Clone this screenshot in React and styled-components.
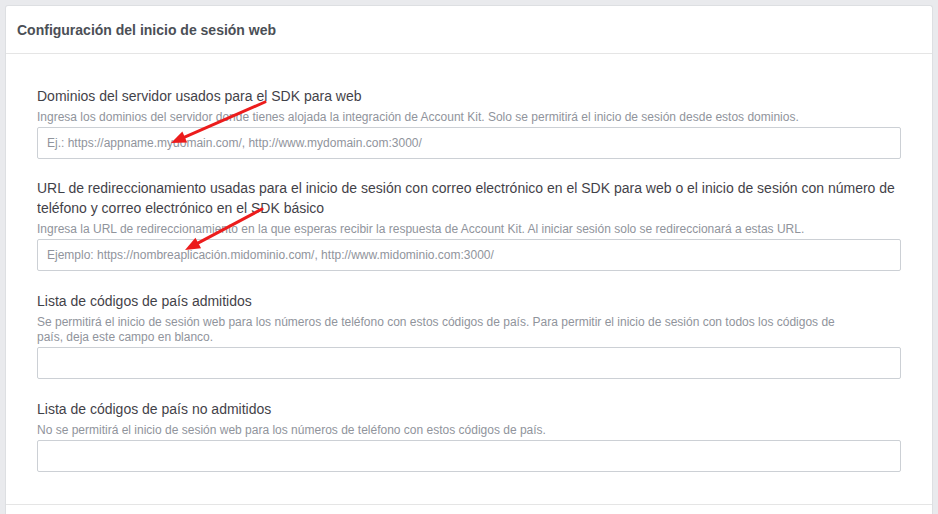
import React from "react";
import styled, { createGlobalStyle } from "styled-components";

const Global = createGlobalStyle`
  html, body { margin: 0; padding: 0; background: #e9eaed; }
  body { font-family: "Liberation Sans", Arial, Helvetica, sans-serif; }
  * { box-sizing: border-box; }
`;

const Page = styled.div`
  position: relative;
  width: 938px;
  height: 514px;
  overflow: hidden;
  padding: 5px 5px 0 5px;
`;

const Card = styled.section`
  background: #fff;
  border: 1px solid #dddfe2;
  border-bottom: none;
  border-radius: 3px 3px 0 0;
  height: 100%;
  display: flex;
  flex-direction: column;
`;

const Header = styled.header`
  height: 48px;
  padding: 0 11px;
  display: flex;
  align-items: center;
  border-bottom: 1px solid #e5e5e5;
`;

const Title = styled.h2`
  margin: 0;
  font-size: 14px;
  font-weight: bold;
  color: #4b4f56;
  padding-top: 1px;
`;

const Body = styled.div`
  padding: 32px 31px 32px 31px;
  display: flex;
  flex-direction: column;
  gap: 20px;
  border-bottom: 1px solid #e5e5e5;
`;

const Field = styled.div`
  display: flex;
  flex-direction: column;
  &:first-child { margin-bottom: -1px; }
`;

const Label = styled.label`
  font-size: 14px;
  line-height: 20px;
  color: #1d2129;
  opacity: 0.85;
`;

const Desc = styled.div`
  font-size: 12px;
  line-height: 15px;
  color: #90949c;
  margin-top: 4px;
  max-width: 800px;
  &:first-child { margin-top: 3px; }
`;

const Input = styled.input`
  margin-top: 2px;
  height: 32px;
  width: 100%;
  border: 1px solid #ccd0d5;
  border-radius: 2px;
  padding: 0 9px;
  font-family: inherit;
  font-size: 12px;
  color: #1d2129;
  background: #fff;
  &::placeholder { color: #90949c; }
`;

const Footer = styled.div`
  flex: 1;
`;

const Overlay = styled.svg`
  position: absolute;
  inset: 0;
  pointer-events: none;
`;

function Arrow({ x1, y1, x2, y2 }) {
  const dx = x2 - x1, dy = y2 - y1;
  const len = Math.hypot(dx, dy);
  const ux = dx / len, uy = dy / len;
  const hl = 15, hw = 6;
  const bx = x2 - ux * hl, by = y2 - uy * hl;
  const px = -uy * hw, py = ux * hw;
  const pts = `${x2},${y2} ${bx + px},${by + py} ${bx - px},${by - py}`;
  return (
    <g>
      <line x1={x1} y1={y1} x2={bx + ux * 2} y2={by + uy * 2} stroke="#ec1c1c" strokeWidth="3" strokeLinecap="round" />
      <polygon points={pts} fill="#ec1c1c" />
    </g>
  );
}

const fields = [
  {
    label: "Dominios del servidor usados para el SDK para web",
    desc: "Ingresa los dominios del servidor donde tienes alojada la integración de Account Kit. Solo se permitirá el inicio de sesión desde estos dominios.",
    placeholder: "Ej.: https://appname.mydomain.com/, http://www.mydomain.com:3000/",
  },
  {
    label: "URL de redireccionamiento usadas para el inicio de sesión con correo electrónico en el SDK para web o el inicio de sesión con número de teléfono y correo electrónico en el SDK básico",
    desc: "Ingresa la URL de redireccionamiento en la que esperas recibir la respuesta de Account Kit. Al iniciar sesión solo se redireccionará a estas URL.",
    placeholder: "Ejemplo: https://nombreaplicación.midominio.com/, http://www.midominio.com:3000/",
  },
  {
    label: "Lista de códigos de país admitidos",
    desc: "Se permitirá el inicio de sesión web para los números de teléfono con estos códigos de país. Para permitir el inicio de sesión con todos los códigos de país, deja este campo en blanco.",
    placeholder: "",
  },
  {
    label: "Lista de códigos de país no admitidos",
    desc: "No se permitirá el inicio de sesión web para los números de teléfono con estos códigos de país.",
    placeholder: "",
  },
];

export default function App() {
  return (
    <>
      <Global />
      <Page>
        <Card>
          <Header>
            <Title>Configuración del inicio de sesión web</Title>
          </Header>
          <Body>
            {fields.map((f, i) => (
              <Field key={i}>
                <Label>{f.label}</Label>
                <Desc>{f.desc}</Desc>
                <Input placeholder={f.placeholder} readOnly />
              </Field>
            ))}
          </Body>
          <Footer />
        </Card>
        <Overlay width="938" height="514" viewBox="0 0 938 514">
          <Arrow x1={265} y1={102} x2={171} y2={143} />
          <Arrow x1={262} y1={209} x2={185} y2={250} />
        </Overlay>
      </Page>
    </>
  );
}
